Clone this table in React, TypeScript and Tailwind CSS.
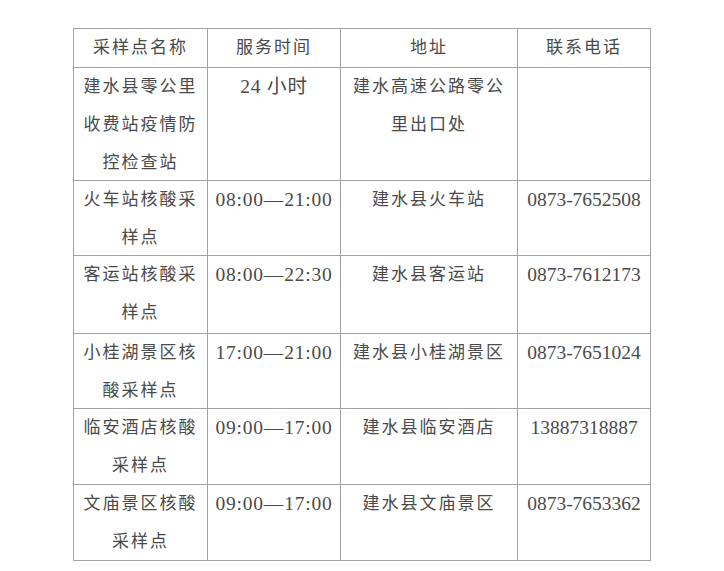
import React from "react";

const rows: { name: string[]; time: string; addr: string[]; phone: string; h: number }[] = [
  { name: ["建水县零公里", "收费站疫情防", "控检查站"], time: "24 小时", addr: ["建水高速公路零公", "里出口处"], phone: "", h: 113 },
  { name: ["火车站核酸采", "样点"], time: "08:00—21:00", addr: ["建水县火车站"], phone: "0873-7652508", h: 75 },
  { name: ["客运站核酸采", "样点"], time: "08:00—22:30", addr: ["建水县客运站"], phone: "0873-7612173", h: 78 },
  { name: ["小桂湖景区核", "酸采样点"], time: "17:00—21:00", addr: ["建水县小桂湖景区"], phone: "0873-7651024", h: 75 },
  { name: ["临安酒店核酸", "采样点"], time: "09:00—17:00", addr: ["建水县临安酒店"], phone: "13887318887", h: 76 },
  { name: ["文庙景区核酸", "采样点"], time: "09:00—17:00", addr: ["建水县文庙景区"], phone: "0873-7653362", h: 76 },
];

const font = { fontFamily: '"Liberation Serif", "Noto Sans CJK SC", serif' };

function Lines({ lines }: { lines: string[] }) {
  return (
    <div className="-mb-[10px]">
      {lines.map((l, i) => (
        <div key={i}>{l}</div>
      ))}
    </div>
  );
}

const cell = "border border-[#a3a3a3] p-0 text-center align-top leading-[38px]";
const cjk = "text-[17px] tracking-[2px]";
const num = "text-[19.5px]";

export default function App() {
  return (
    <div className="h-[571px] w-[724px] bg-white pl-[73px] pt-[28px] text-[#4a4a4a]" style={font}>
      <table className="table-fixed border-collapse">
        <colgroup>
          <col className="w-[134px]" />
          <col className="w-[133px]" />
          <col className="w-[177px]" />
          <col className="w-[133px]" />
        </colgroup>
        <tbody>
          <tr className="h-[39px]">
            {["采样点名称", "服务时间", "地址", "联系电话"].map((t) => (
              <td key={t} className={`${cell} ${cjk}`}>
                <Lines lines={[t]} />
              </td>
            ))}
          </tr>
          {rows.map((r, i) => (
            <tr key={i} style={{ height: r.h }}>
              <td className={`${cell} ${cjk}`}>
                <Lines lines={r.name} />
              </td>
              <td className={`${cell} ${num} tracking-[0.8px]`}>
                <Lines lines={[r.time]} />
              </td>
              <td className={`${cell} ${cjk}`}>
                <Lines lines={r.addr} />
              </td>
              <td className={`${cell} ${num}`}>
                <Lines lines={[r.phone]} />
              </td>
            </tr>
          ))}
        </tbody>
      </table>
    </div>
  );
}
